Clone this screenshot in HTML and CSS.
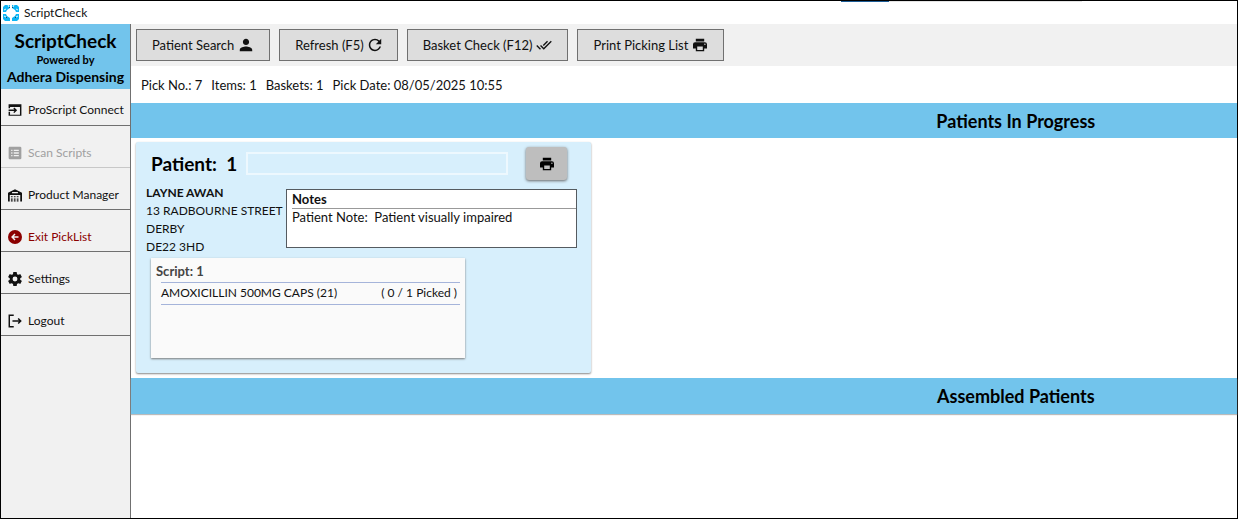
FILE: index.html
```html
<!DOCTYPE html>
<html lang="en">
<head>
    <meta charset="UTF-8">
    <title>ScriptCheck</title>
    <link rel="stylesheet" href="styles.css">
</head>
<body>
<div class="window">
    <header class="titlebar">
        <svg class="logo" viewBox="0 0 16 16">
            <path d="M2 0h5v3L4 5 3 7H0V2zM9 0h5l2 2v5h-3l-1-2-3-2zM0 9h3l1 2 3 2v3H2l-2-2zM13 9h3v5l-2 2H9v-3l3-2z" fill="#0bb5f5"/>
            <path d="M5 0l1 2M11 0l-1 2M1 5l2-1M15 5l-2-1M1 11l2 1M15 11l-2 1" stroke="#e4f7ff" stroke-width="1"/>
            <path d="M6 2l1 1M10 2L9 3M3 12l1 1M13 12l-1 1" stroke="#234a60" stroke-width="1"/>
        </svg>
        <span>ScriptCheck</span>
    </header>
    <div class="layout">
        <aside class="sidebar">
            <div class="brand">
                <h1>ScriptCheck</h1>
                <p class="powered">Powered by</p>
                <p class="product">Adhera Dispensing</p>
            </div>
            <nav class="nav">
                <button type="button">
                    <svg class="icon" viewBox="0 0 24 24"><path d="M1 9V2h22v20H1v-7h2.500v5h17V7h-17v2z"/><path d="M1 12.500h13M10 8.500l4 4-4 4" fill="none" stroke="currentColor" stroke-width="2.400"/></svg>
                    <span>ProScript Connect</span>
                </button>
                <button type="button" disabled>
                    <svg class="icon" viewBox="1 1 22 22"><path fill-rule="evenodd" d="M4 2h16a2 2 0 0 1 2 2v16a2 2 0 0 1-2 2H4a2 2 0 0 1-2-2V4c0-1.100.9-2 2-2zM6 7v2h2V7zM10 7v2h8V7zM6 11v2h2v-2zM10 11v2h8v-2zM6 15v2h2v-2zM10 15v2h8v-2z"/></svg>
                    <span>Scan Scripts</span>
                </button>
                <button type="button">
                    <svg class="icon" viewBox="0 0 24 24"><path d="M12 2L0 8v15h3V12h18v11h3V8zM7 7h10v2H7zM5 14h3v2H5zM10 14h3v2h-3zM15 14h3v2h-3zM5 18h3v2H5zM10 18h3v2h-3zM15 18h3v2h-3zM5 21h3v2H5zM10 21h3v2h-3zM15 21h3v2h-3z" fill-rule="evenodd"/></svg>
                    <span>Product Manager</span>
                </button>
                <button type="button" class="exit">
                    <svg class="icon" viewBox="0 0 24 24"><circle cx="12" cy="12" r="12"/><path d="M18 12H7M12 7l-5 5 5 5" fill="none" stroke="#f1f1f1" stroke-width="2.500"/></svg>
                    <span>Exit PickList</span>
                </button>
                <button type="button">
                    <svg class="icon" viewBox="2 2 20 20"><path d="M12 15.500A3.500 3.500 0 0 1 8.500 12 3.500 3.500 0 0 1 12 8.500a3.500 3.500 0 0 1 3.500 3.500 3.500 3.500 0 0 1-3.500 3.500m7.430-2.530c.04-.32.07-.64.07-.97s-.03-.66-.07-1l2.110-1.630c.19-.15.24-.42.12-.64l-2-3.460c-.12-.22-.39-.31-.61-.22l-2.490 1c-.52-.39-1.060-.73-1.690-.98l-.37-2.650A.506.506 0 0 0 14 2h-4c-.25 0-.46.18-.5.42l-.37 2.650c-.63.25-1.170.59-1.690.98l-2.490-1c-.22-.09-.49 0-.61.22l-2 3.460c-.13.22-.07.49.12.64L4.570 11c-.04.34-.07.67-.07 1s.03.65.07.97l-2.110 1.660c-.19.15-.25.42-.12.64l2 3.460c.12.22.39.3.61.22l2.490-1.010c.52.4 1.060.74 1.690.99l.37 2.650c.04.24.25.42.5.42h4c.25 0 .46-.18.5-.42l.37-2.650c.63-.26 1.170-.59 1.690-.99l2.490 1.010c.22.08.49 0 .61-.22l2-3.460c.12-.22.07-.49-.12-.64z"/></svg>
                    <span>Settings</span>
                </button>
                <button type="button">
                    <svg class="icon" viewBox="1 1 22 22"><path d="M10 3H3v18h7M8 12h13M17 8l4 4-4 4" fill="none" stroke="currentColor" stroke-width="2.300"/></svg>
                    <span>Logout</span>
                </button>
            </nav>
        </aside>
        <main class="main">
            <div class="toolbar">
                <button type="button">Patient Search
                    <svg class="icon icon-wide" viewBox="3 3 18 18"><path d="M12 12c2.210 0 4-1.790 4-4s-1.790-4-4-4-4 1.790-4 4 1.790 4 4 4zm0 2c-2.670 0-8 1.340-8 4v2h16v-2c0-2.660-5.330-4-8-4z"/></svg>
                </button>
                <button type="button">Refresh (F5)
                    <svg class="icon" viewBox="3 3 18 18"><path d="M17.650 6.350A7.958 7.958 0 0 0 12 4c-4.420 0-7.990 3.580-7.990 8s3.570 8 7.990 8c3.730 0 6.840-2.550 7.730-6h-2.080A5.990 5.990 0 0 1 12 18c-3.310 0-6-2.690-6-6s2.690-6 6-6c1.660 0 3.140.69 4.220 1.780L13 11h7V4z"/></svg>
                </button>
                <button type="button">Basket Check (F12)
                    <svg class="icon icon-wide" viewBox="0 4 24 16"><path d="M.41 13.410L6 19l1.410-1.420L1.830 12m20.410-6.420L11.660 16.170 7.500 12l-1.430 1.410L11.660 19l12-12M18 7l-1.410-1.420-6.350 6.350 1.420 1.410L18 7z"/></svg>
                </button>
                <button type="button">Print Picking List
                    <svg class="icon icon-wide" viewBox="2 2 20 20"><path d="M18 3H6v4h12m1 5a1 1 0 0 1-1-1 1 1 0 0 1 1-1 1 1 0 0 1 1 1 1 1 0 0 1-1 1m-3 7H8v-5h8m3-6H5a3 3 0 0 0-3 3v6h4v4h12v-4h4v-6a3 3 0 0 0-3-3z"/></svg>
                </button>
            </div>
            <div class="summary">
                <span>Pick No.: 7</span>
                <span>Items: 1</span>
                <span>Baskets: 1</span>
                <span>Pick Date: 08/05/2025 10:55</span>
            </div>

            <h2 class="band">Patients In Progress</h2>
            <section class="patients">
                <article class="card">
                    <div class="card-head">
                        <label for="basket">Patient:&nbsp; 1</label>
                        <input type="text" id="basket">
                        <button type="button" class="print" aria-label="Print">
                            <svg class="icon" viewBox="2 2 20 20"><path d="M18 3H6v4h12m1 5a1 1 0 0 1-1-1 1 1 0 0 1 1-1 1 1 0 0 1 1 1 1 1 0 0 1-1 1m-3 7H8v-5h8m3-6H5a3 3 0 0 0-3 3v6h4v4h12v-4h4v-6a3 3 0 0 0-3-3z"/></svg>
                        </button>
                    </div>
                    <div class="details">
                        <address>
                            <strong>LAYNE AWAN</strong><br>
                            13 RADBOURNE STREET<br>
                            DERBY<br>
                            DE22 3HD
                        </address>
                        <div class="notes">
                            <h3>Notes</h3>
                            <p>Patient Note:&nbsp; Patient visually impaired</p>
                        </div>
                    </div>
                    <div class="script">
                        <h3>Script: 1</h3>
                        <div class="item">
                            <span>AMOXICILLIN 500MG CAPS (21)</span>
                            <span>( 0 / 1 Picked )</span>
                        </div>
                    </div>
                </article>
            </section>

            <h2 class="band assembled">Assembled Patients</h2>
        </main>
    </div>
</div>
</body>
</html>
```
FILE: styles.css
```css
*{
    margin: 0;
    padding: 0;
    box-sizing: border-box;
}
body{
    font: 13px/18px Lato, "Noto Sans", sans-serif;
    color: #111;
    background: #fff;
}
button,input{
    font: inherit;
    color: inherit;
}
.window{
    display: flex;
    flex-direction: column;
    min-height: 100vh;
    border: 1px solid #000;
}
.icon{
    width: 14px;
    height: 14px;
    flex: none;
    fill: currentColor;
}

/* title bar */
.titlebar{
    position: relative;
    display: flex;
    align-items: center;
    gap: 5px;
    height: 23px;
    padding-left: 2px;
    font-size: 12px;
}
.titlebar::after{
    content: "";
    position: absolute;
    top: 0;
    left: 68%;
    width: 241px;
    height: 1px;
    background: linear-gradient(to right, #1c5c96 48px, #e4e4e4 48px);
}
.logo{
    width: 16px;
    height: 16px;
}
.layout{
    display: flex;
    flex: 1;
}

/* sidebar */
.sidebar{
    flex: none;
    width: 130px;
    background: #f1f1f1;
    border-right: 1px solid #707070;
}
.brand{
    height: 65px;
    padding-top: 6px;
    background: #72c4ec;
    text-align: center;
    font-weight: bold;
    white-space: nowrap;
    color: #000;
}
.brand h1{
    font-size: 19px;
    line-height: 22px;
}
.powered{
    font-size: 11px;
    line-height: 16px;
}
.product{
    font-size: 14px;
    line-height: 18px;
}
.nav{
    display: flex;
    flex-direction: column;
}
.nav button{
    display: flex;
    align-items: center;
    gap: 6px;
    height: 42px;
    padding: 13px 0 0 7px;
    border: 0;
    border-bottom: 1px solid #707070;
    background: none;
    font-size: 12px;
    white-space: nowrap;
}
.nav button:first-child{
    height: 37px;
    padding-top: 6px;
}
.nav button:disabled{
    color: #a0a0a0;
    border-color: #c8c8c8;
}
.nav .exit{
    color: #8b0000;
}

/* main area */
.main{
    flex: 1;
    min-width: 0;
}
.toolbar{
    display: flex;
    gap: 9px;
    height: 42px;
    padding: 5px;
    background: #f1f1f1;
}
.toolbar button{
    display: flex;
    align-items: center;
    gap: 4px;
    padding: 0 15px;
    border: 1px solid #707070;
    background: #ddd;
    white-space: nowrap;
}
.toolbar .icon-wide{
    width: 16px;
}
.summary{
    display: flex;
    align-items: center;
    gap: 9px;
    height: 37px;
    padding-left: 10px;
}
.band{
    height: 35px;
    padding-left: 60%;
    background: #72c4ec;
    color: #000;
    font-size: 18px;
    line-height: 36px;
    text-align: center;
    white-space: nowrap;
}
.assembled{
    height: 36px;
    box-shadow: 0 1px 1px #bbb;
}
.patients{
    padding: 4px 5px 5px;
}

/* patient card */
.card{
    width: 455px;
    height: 231px;
    padding: 5px 14px 0 10px;
    border-radius: 2px;
    background: #d7effc;
    box-shadow: 0 1px 2px #888;
}
.card-head{
    display: flex;
    align-items: center;
    height: 33px;
    padding-left: 5px;
    color: #000;
}
.card-head label{
    width: 95px;
    font-size: 19px;
    font-weight: bold;
    white-space: nowrap;
}
.card-head input{
    width: 262px;
    height: 23px;
    padding: 0 4px;
    border: 2px solid #edf8fe;
    background: none;
}
.print{
    display: flex;
    align-items: center;
    justify-content: center;
    width: 41px;
    height: 33px;
    margin-left: 18px;
    border: 0;
    border-radius: 3px;
    background: #bebebe;
    box-shadow: 0 1px 3px #666;
}
.details{
    display: flex;
    align-items: flex-start;
    margin-top: 4px;
}
address{
    width: 140px;
    font-size: 12px;
    font-style: normal;
    white-space: nowrap;
}
.notes{
    flex: 1;
    height: 59px;
    margin-top: 5px;
    padding-left: 5px;
    border: 1px solid #555b60;
    background: #fff;
}
.notes h3{
    border-bottom: 1px solid #999;
    font-size: 13px;
    line-height: 18px;
}
.notes p{
    line-height: 16px;
}
.script{
    width: 314px;
    height: 100px;
    margin: 2px 0 0 5px;
    padding: 4px 5px;
    background: #fafafa;
    box-shadow: 0 1px 2px #777;
}
.script h3{
    color: #444;
    font-size: 13px;
    line-height: 18px;
}
.item{
    display: flex;
    justify-content: space-between;
    margin: 2px 0 0 5px;
    padding: 1px 3px 2px 0;
    border: solid #a5b4da;
    border-width: 1px 0;
    font-size: 12px;
}
```
